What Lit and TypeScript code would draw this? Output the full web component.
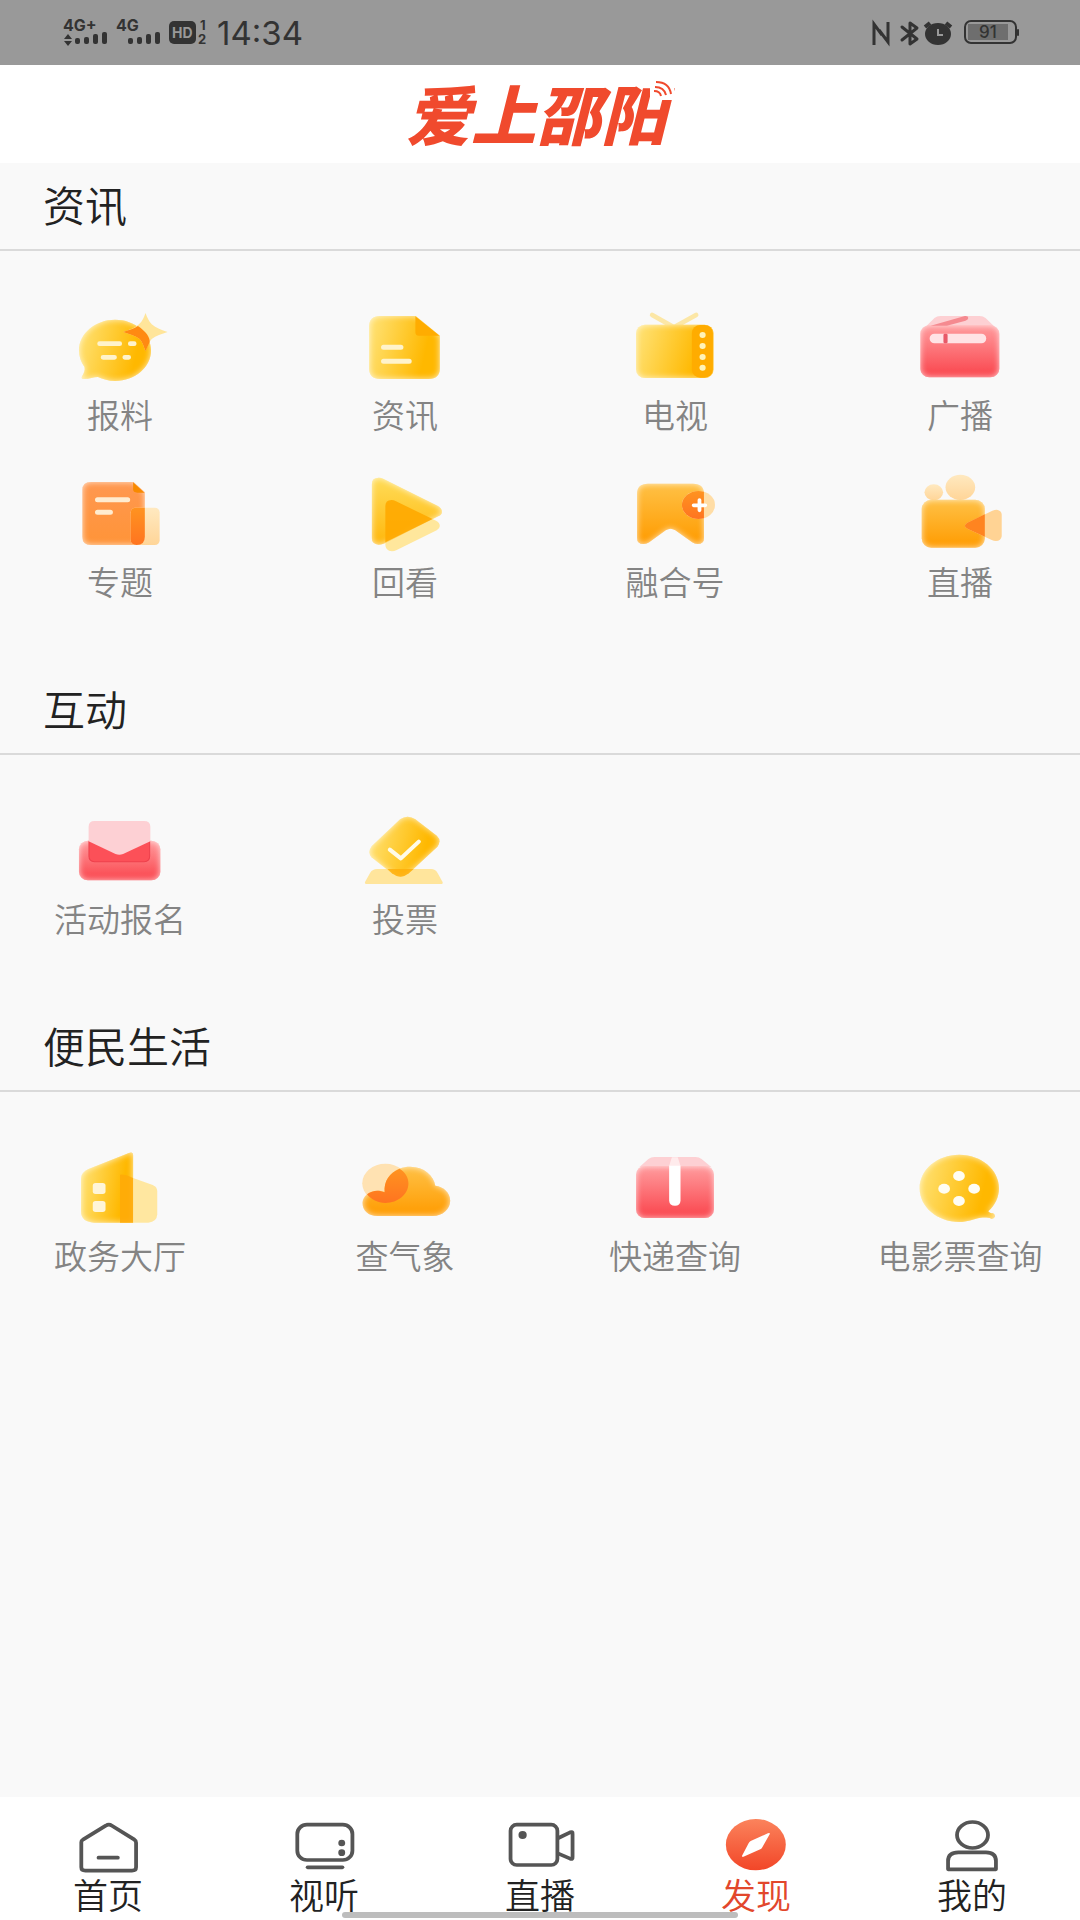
import { LitElement, html, svg, css } from "lit";
import { customElement, state } from "lit/decorators.js";

interface Entry {
  label: string;
  box: string;
  art: unknown;
}

interface Group {
  title: string;
  entries: Entry[];
}

const news: Entry[] = [
  {
    label: "报料",
    box: "203 438 290 240",
    art: svg`
      <path filter="url(#glow)" fill="url(#amber)" d="M334 479C391 479 438 520 438 571C438 622 391 663 334 663C315 663 298 658 284 651C272 651 259 657 243 657C236 657 236 652 239 647C244 638 247 630 245 621C235 607 229 590 229 571C229 520 277 479 334 479Z"/>
      <path fill="#ffe59a" d="M422 459C427 472 431 483 440 493C452 504 469 510 486 516C469 522 452 527 440 537C431 547 427 560 422 574C417 560 414 547 405 537C392 527 374 522 357 516C374 510 392 504 403 493C414 483 417 472 422 459Z"/>
      <path fill="#ff8a12" d="M357 516C374 510 390 506 400 498C423 514 436 533 434 546L422 574C417 560 414 547 405 537C392 527 374 522 357 516Z"/>
      <path stroke="#fff3cc" stroke-width="14" stroke-linecap="round" d="M289 551H347M378 551H389M299 592H332M362 592H373"/>`,
  },
  {
    label: "资讯",
    box: "1031 438 290 240",
    art: svg`
      <path filter="url(#glow)" fill="url(#amber)" d="M1104 468H1207L1277 527V625Q1277 657 1244 657H1104Q1072 657 1072 625V500Q1072 468 1104 468Z"/>
      <path fill="#ffac00" d="M1206 469L1276 527H1216Q1206 527 1206 516Z"/>
      <path stroke="#fff3cc" stroke-width="15" stroke-linecap="round" d="M1114 562H1164M1114 604H1188"/>`,
  },
  {
    label: "电视",
    box: "247 48 290 240",
    art: svg`
      <path fill="none" stroke="#fce7a6" stroke-width="14" stroke-linecap="round" stroke-linejoin="round" d="M326 75L389 112L453 75"/>
      <rect filter="url(#glow)" fill="url(#amber)" x="279" y="104" width="225" height="160" rx="26"/>
      <rect fill="#ffac00" x="441" y="105" width="61" height="158" rx="24"/>
      <g fill="#fff3b8">
        <circle cx="472" cy="135" r="9"/><circle cx="472" cy="168" r="9"/>
        <circle cx="472" cy="201" r="9"/><circle cx="472" cy="233" r="9"/>
      </g>`,
  },
  {
    label: "广播",
    box: "1075 48 290 240",
    art: svg`
      <path fill="#fdd0d3" d="M1146 84Q1153 78 1163 78H1277Q1287 78 1294 84L1319 109H1122Z"/>
      <rect filter="url(#glow)" fill="url(#rose)" x="1105" y="106" width="229" height="156" rx="26"/>
      <path fill="#f58a90" d="M1135 107L1234 78Q1244 77 1244 84Q1244 89 1236 92L1182 107Z"/>
      <rect fill="#ffe3e5" x="1132" y="131" width="164" height="29" rx="14"/>
      <rect fill="#e85a68" x="1172" y="131" width="12" height="29" rx="4"/>`,
  },
  {
    label: "专题",
    box: "203 39 290 240",
    art: svg`
      <path filter="url(#glow)" fill="url(#coral)" d="M264 66H387L420 97V235Q420 255 398 255H264Q239 255 239 231V90Q239 66 264 66Z"/>
      <path fill="#f88a00" d="M386 67L419 98H398Q386 98 386 88Z"/>
      <rect fill="url(#cream)" x="379" y="143" width="84" height="112" rx="14"/>
      <path fill="url(#flame)" d="M394 143H420V230Q420 255 396 255Q379 255 379 238V159Q379 143 394 143Z"/>
      <path stroke="#ffecd0" stroke-width="15" stroke-linecap="round" d="M283 119H370M283 157H320"/>`,
  },
  {
    label: "回看",
    box: "1031 39 290 240",
    art: svg`
      <path fill="#ffe79c" d="M1119 138Q1119 120 1137 120Q1143 120 1150 124L1266 182Q1277 188 1277 198Q1277 205 1268 211L1152 270Q1145 274 1138 274Q1119 272 1119 254Z"/>
      <path filter="url(#glow)" fill="url(#amberdown)" d="M1080 72Q1080 53 1100 53Q1107 53 1114 57L1270 137Q1283 144 1283 155Q1283 164 1272 169L1117 250Q1109 254 1100 254Q1080 253 1080 235Z"/>
      <path fill="#ffa800" opacity=".9" d="M1119 138Q1119 120 1137 120Q1143 120 1150 124L1256 177L1119 247Z"/>`,
  },
  {
    label: "融合号",
    box: "247 39 290 240",
    art: svg`
      <path filter="url(#glow)" fill="url(#orange)" d="M314 71H444Q476 71 476 102V234Q476 252 457 252Q449 252 442 247L393 211Q379 202 365 211L317 247Q310 252 301 252Q282 252 282 234V102Q282 71 314 71Z"/>
      <ellipse fill="#ffdda6" cx="460" cy="135" rx="48" ry="42"/>
      <path fill="url(#flame)" d="M476 95V175Q468 177 460 177C434 177 412 158 412 135C412 112 434 93 460 93Q468 93 476 95Z"/>
      <path stroke="#fff" stroke-width="11" stroke-linecap="round" d="M446 136H480M463 120V151"/>`,
  },
  {
    label: "直播",
    box: "1075 39 290 240",
    art: svg`
      <ellipse fill="url(#cream)" cx="1144" cy="97" rx="27" ry="24"/>
      <ellipse fill="url(#cream)" cx="1221" cy="82" rx="43" ry="38"/>
      <rect filter="url(#glow)" fill="url(#orange)" x="1109" y="119" width="183" height="144" rx="28"/>
      <path fill="#ffd394" d="M1241 188L1314 152Q1320 149 1327 149Q1341 152 1341 164V229Q1339 243 1324 243Q1318 243 1312 240L1243 207Q1226 198 1241 188Z"/>
      <path fill="#ff8420" d="M1292 163V230L1243 207Q1226 198 1241 188Z"/>`,
  },
];

const interact: Entry[] = [
  {
    label: "活动报名",
    box: "203 390 290 240",
    art: svg`
      <rect filter="url(#glow)" fill="url(#rose)" x="229" y="482" width="236" height="119" rx="26"/>
      <path fill="#fc5058" stroke="#ee404c" stroke-width="3" d="M258 484H434V529Q434 545 418 545H274Q258 545 258 529Z"/>
      <path fill="#fdd0d4" d="M274 423H418Q436 423 436 440V484L357 522Q346 527 335 522L257 484V440Q257 423 274 423Z"/>`,
  },
  {
    label: "投票",
    box: "1031 390 290 240",
    art: svg`
      <path fill="#ffe59c" d="M1095 567H1252Q1264 567 1270 578L1285 606Q1287 612 1280 612H1066Q1058 612 1060 606L1075 578Q1082 567 1095 567Z"/>
      <path filter="url(#glow)" fill="url(#amber)" d="M1162 418Q1183 403 1206 418L1268 467Q1283 482 1270 500L1187 580Q1163 600 1138 580L1079 532Q1066 516 1080 498Z"/>
      <path fill="#ffac08" opacity=".8" d="M1125 567H1201L1187 580Q1163 600 1138 580Z"/>
      <path fill="none" stroke="#fffbe8" stroke-width="12" stroke-linecap="round" stroke-linejoin="round" d="M1132 509L1164 535L1216 485"/>`,
  },
];

const life: Entry[] = [
  {
    label: "政务大厅",
    box: "203 411 290 240",
    art: svg`
      <path filter="url(#glow)" fill="url(#amber)" d="M257 477L374 429Q386 424 386 435V638H273Q235 636 235 604V504Q236 487 257 477Z"/>
      <path fill="#ffe7a0" d="M386 504L443 525Q456 531 456 544V613Q455 636 430 638H386Z"/>
      <path fill="#ffa908" opacity=".85" d="M348 494Q360 492 386 504V638H348Z"/>
      <rect fill="#fff5d8" x="269" y="519" width="37" height="33" rx="8"/>
      <rect fill="#fff5d8" x="269" y="573" width="37" height="33" rx="8"/>`,
  },
  {
    label: "查气象",
    box: "1031 411 290 240",
    art: svg`
      <ellipse fill="#ffe2b2" cx="1119" cy="520" rx="67" ry="59"/>
      <path filter="url(#glow)" fill="url(#orange)" d="M1117 546C1114 501 1148 470 1191 470C1231 470 1259 496 1264 527C1288 530 1307 548 1307 572C1307 597 1284 618 1257 618H1097C1070 618 1053 602 1053 579C1053 555 1084 533 1117 546Z"/>
      <path fill="url(#flame)" d="M1160 476C1176 486 1186 502 1186 520C1186 553 1156 579 1119 579C1097 579 1078 569 1066 553C1080 541 1100 539 1117 547C1114 512 1132 488 1160 476Z"/>`,
  },
  {
    label: "快递查询",
    box: "247 51 290 240",
    art: svg`
      <path fill="#fdd0d3" d="M315 87Q323 81 332 81H452Q462 81 469 87L498 112H288Z"/>
      <rect filter="url(#glow)" fill="url(#rose)" x="279" y="108" width="226" height="156" rx="26"/>
      <path fill="#ffebec" d="M383 82H400L408 108H375Z"/>
      <path fill="#fff" d="M375 107H408V212Q407 227 392 227Q376 227 375 212Z"/>`,
  },
  {
    label: "电影票查询",
    box: "1075 51 290 240",
    art: svg`
      <path filter="url(#glow)" fill="url(#amber)" d="M1218 74C1282 74 1333 119 1333 175C1333 202 1321 226 1302 244C1306 249 1311 250 1316 250Q1322 254 1321 260Q1318 266 1311 266C1303 262 1292 262 1280 263C1258 267 1240 276 1218 276C1154 276 1103 231 1103 175C1103 119 1154 74 1218 74Z"/>
      <g fill="#fffdf4">
        <ellipse cx="1217" cy="138" rx="17" ry="15"/><ellipse cx="1217" cy="213" rx="17" ry="15"/>
        <ellipse cx="1174" cy="176" rx="17" ry="15"/><ellipse cx="1261" cy="176" rx="17" ry="15"/>
      </g>`,
  },
];

const groups: Group[] = [
  { title: "资讯", entries: news },
  { title: "互动", entries: interact },
  { title: "便民生活", entries: life },
];

const tabs: Entry[] = [
  {
    label: "首页",
    box: "209 114 209 168",
    art: svg`<g class="line">
      <path d="M236 187Q236 182 242 178L307 137Q316 131 325 137L389 178Q395 182 395 188V262Q395 272 383 272H248Q236 272 236 262Z"/>
      <path d="M286 233H342"/></g>`,
  },
  {
    label: "视听",
    box: "836 114 209 168",
    art: svg`<g class="line">
      <rect x="863" y="134" width="160" height="106" rx="28"/><path d="M893 262H994"/></g>
      <circle class="dot" cx="992" cy="189" r="10"/><circle class="dot" cx="992" cy="218" r="10"/>`,
  },
  {
    label: "直播",
    box: "1464 114 209 168",
    art: svg`<g class="line">
      <rect x="1483" y="134" width="136" height="121" rx="18"/>
      <path d="M1622 174L1656 157Q1664 154 1663 161V232Q1664 239 1656 236L1622 221"/></g>
      <circle class="dot" cx="1518" cy="165" r="12"/>`,
  },
  {
    label: "发现",
    box: "523 114 209 168",
    art: svg`
      <ellipse fill="url(#ember)" cx="627" cy="194" rx="87" ry="77"/>
      <path fill="#fff" d="M668 161Q667 158 662 160L612 183Q608 186 606 190L587 227Q586 232 591 230L640 208Q643 207 645 203Z"/>`,
  },
  {
    label: "我的",
    box: "1150 114 209 168",
    art: svg`<g class="line">
      <ellipse cx="1256" cy="165" rx="45" ry="39"/>
      <path d="M1185 268V243Q1185 217 1215 217H1295Q1324 217 1324 243V268Z"/></g>`,
  },
];

@customElement("app-root")
export class AppRoot extends LitElement {
  @state() private active = "发现";

  static styles = css`
    :host {
      display: flex;
      flex-direction: column;
      min-height: 100vh;
      background: #f9f9f9;
      font-family: "Noto Sans CJK SC", sans-serif;
      font-weight: 350;
      color: #222;
    }
    a {
      color: inherit;
      text-decoration: none;
    }
    svg {
      display: block;
    }
    .defs {
      position: absolute;
      width: 0;
      height: 0;
    }
    .status {
      display: flex;
      align-items: center;
      justify-content: space-between;
      height: 65px;
      padding: 0 60px;
      background: #999;
      color: #333;
      font-family: Inter, sans-serif;
    }
    .side {
      display: flex;
      align-items: center;
      gap: 8px;
    }
    .clock {
      font-size: 33px;
      font-weight: 400;
      line-height: 40px;
    }
    .status text {
      font-family: Inter, sans-serif;
      font-weight: 700;
      fill: #333;
    }
    .status .knockout {
      fill: #999;
    }
    .status .charge {
      font-weight: 500;
    }
    .brand {
      display: flex;
      align-items: center;
      justify-content: center;
      height: 94px;
      padding: 0 8px 4px 0;
      background: #fff;
    }
    .logo {
      position: relative;
      margin: 0;
      font-size: 65px;
      line-height: 64px;
      font-weight: 900;
      font-style: italic;
      color: #f04a2d;
    }
    .waves {
      position: absolute;
      top: 0;
      right: -8px;
    }
    .title {
      margin: 0;
      padding: 0 43px 4px;
      border-bottom: 2px solid #dadada;
      font-size: 42px;
      line-height: 82px;
      font-weight: 350;
    }
    .grid {
      display: grid;
      grid-template-columns: 8fr 1fr 9fr 9fr 1fr 8fr;
      row-gap: 39px;
      padding: 55px 0 66px;
    }
    .entry {
      display: flex;
      flex-direction: column;
      align-items: center;
      gap: 8px;
      font-size: 33px;
      line-height: 40px;
      color: #848484;
      white-space: nowrap;
    }
    .entry:nth-child(4n + 1) {
      grid-column: 1;
    }
    .entry:nth-child(4n + 2) {
      grid-column: 3;
    }
    .entry:nth-child(4n + 3) {
      grid-column: 4;
    }
    .entry:nth-child(4n) {
      grid-column: 6;
    }
    .tabs {
      position: relative;
      display: grid;
      grid-template-columns: repeat(5, 1fr);
      margin-top: auto;
      padding: 21px 0 6px;
      background: #fff;
    }
    .tab {
      display: flex;
      flex-direction: column;
      align-items: center;
      font-size: 35px;
      line-height: 40px;
    }
    .tab.on {
      color: #e2472c;
    }
    .line {
      fill: none;
      stroke: #555;
      stroke-width: 11px;
      stroke-linecap: round;
      stroke-linejoin: round;
    }
    .dot {
      fill: #555;
    }
    .pill {
      position: absolute;
      bottom: 2px;
      left: 50%;
      width: 396px;
      height: 6px;
      margin-left: -198px;
      border-radius: 3px;
      background: #bdbdbd;
    }
  `;

  private defs() {
    return html`<svg class="defs" aria-hidden="true">
      <defs>
        <filter id="glow" x="0" y="0" width="1" height="1" color-interpolation-filters="sRGB">
          <feGaussianBlur in="SourceAlpha" stdDeviation="9" result="soft" />
          <feFlood flood-color="#fff" flood-opacity=".75" />
          <feComposite operator="out" in2="soft" result="rim" />
          <feComposite operator="in" in="rim" in2="SourceAlpha" result="inner" />
          <feMerge><feMergeNode in="SourceGraphic" /><feMergeNode in="inner" /></feMerge>
        </filter>
        <linearGradient id="amber" x1="0" y1=".4" x2="1" y2=".6">
          <stop offset="0" stop-color="#ffe070" /><stop offset=".45" stop-color="#ffca30" />
          <stop offset=".8" stop-color="#ffb800" />
        </linearGradient>
        <linearGradient id="amberdown" x1="0" y1="0" x2="0" y2="1">
          <stop offset="0" stop-color="#ffdc58" /><stop offset="1" stop-color="#ffb70c" />
        </linearGradient>
        <linearGradient id="rose" x1="0" y1="0" x2="0" y2="1">
          <stop offset="0" stop-color="#ff9c9e" /><stop offset="1" stop-color="#fa444c" />
        </linearGradient>
        <linearGradient id="coral" x1="0" y1="0" x2="0" y2="1">
          <stop offset="0" stop-color="#ff9850" /><stop offset="1" stop-color="#ff9438" />
        </linearGradient>
        <linearGradient id="orange" x1="0" y1="0" x2="0" y2="1">
          <stop offset="0" stop-color="#ffc146" /><stop offset="1" stop-color="#ff9b00" />
        </linearGradient>
        <linearGradient id="cream" x1="0" y1="0" x2="0" y2="1">
          <stop offset="0" stop-color="#ffe9c0" /><stop offset="1" stop-color="#ffd598" />
        </linearGradient>
        <linearGradient id="flame" x1="0" y1="0" x2="0" y2="1">
          <stop offset="0" stop-color="#ff9320" /><stop offset="1" stop-color="#ff7420" />
        </linearGradient>
        <linearGradient id="ember" x1="0" y1="0" x2="0" y2="1">
          <stop offset="0" stop-color="#fb835c" /><stop offset="1" stop-color="#f24628" />
        </linearGradient>
      </defs>
    </svg>`;
  }

  private picture(entry: Entry, width: number, height: number) {
    return html`<svg width=${width} height=${height} viewBox=${entry.box} preserveAspectRatio="none" aria-hidden="true">${entry.art}</svg>`;
  }

  private statusBar() {
    return html`<div class="status">
      <div class="side">
        <svg width="149" height="65" viewBox="0 0 149 65">
          <text x="3" y="31" font-size="16">4G+</text>
          <text x="56" y="31" font-size="16">4G</text>
          <g fill="#333">
            <path d="M4 39L8 34L12 39ZM4 41L8 46L12 41Z" />
            <rect x="15" y="38" width="5" height="6" rx="2" /><rect x="24" y="37" width="5" height="7" rx="2" />
            <rect x="33" y="34" width="5" height="10" rx="2" /><rect x="42" y="32" width="5" height="12" rx="2" />
            <rect x="68" y="38" width="5" height="6" rx="2" /><rect x="77" y="37" width="5" height="7" rx="2" />
            <rect x="86" y="34" width="5" height="10" rx="2" /><rect x="95" y="32" width="5" height="12" rx="2" />
            <rect x="109" y="21" width="27" height="23" rx="5" />
          </g>
          <text class="knockout" x="112" y="38" font-size="14">HD</text>
          <text x="140" y="30" font-size="13">1</text>
          <text x="138" y="44" font-size="13">2</text>
        </svg>
        <time class="clock">14:34</time>
      </div>
      <svg width="150" height="65" viewBox="870 0 150 65">
        <g fill="none" stroke="#333" stroke-width="3">
          <path d="M874 45V24L882 35M879 30L888 42V22" />
          <path stroke-linejoin="round" stroke-linecap="round" d="M902 27L917 39L910 44V23L917 28L902 40" />
          <path stroke-width="4" d="M925 27L930 23M951 27L946 23" />
          <rect x="965" y="21" width="51" height="22" rx="6" stroke-width="2" />
        </g>
        <ellipse cx="938" cy="34" rx="13" ry="11" fill="#333" />
        <path d="M938 29V35H943" fill="none" stroke="#999" stroke-width="2" />
        <rect x="968" y="24" width="40" height="16" fill="#6e6e6e" />
        <rect x="1017" y="29" width="2" height="7" rx="1" fill="#333" />
        <text class="charge" x="979" y="38" font-size="17">91</text>
      </svg>
    </div>`;
  }

  render() {
    return html`
      ${this.defs()} ${this.statusBar()}
      <header class="brand">
        <h1 class="logo">
          爱上邵阳<svg class="waves" width="24" height="20" viewBox="0 0 24 20" aria-hidden="true">
            <path fill="#fff" d="M0 0H24V20H0Z" />
            <g fill="none" stroke="#f04a2d" stroke-width="2">
              <path d="M6 2Q19 2 21 14M5 7Q14 7 16 15M4 11Q10 11 11 16" />
            </g>
          </svg>
        </h1>
      </header>
      <main>
        ${groups.map(
          (group) => html`<section>
            <h2 class="title">${group.title}</h2>
            <div class="grid">
              ${group.entries.map(
                (entry) => html`<a class="entry" href="#${entry.label}">${this.picture(entry, 100, 80)}<span>${entry.label}</span></a>`
              )}
            </div>
          </section>`
        )}
      </main>
      <nav class="tabs">
        ${tabs.map(
          (tab) => html`<a
            class="tab ${tab.label === this.active ? "on" : ""}"
            href="#${tab.label}"
            @click=${() => (this.active = tab.label)}
            >${this.picture(tab, 72, 56)}<span>${tab.label}</span></a
          >`
        )}
        <div class="pill"></div>
      </nav>
    `;
  }
}
